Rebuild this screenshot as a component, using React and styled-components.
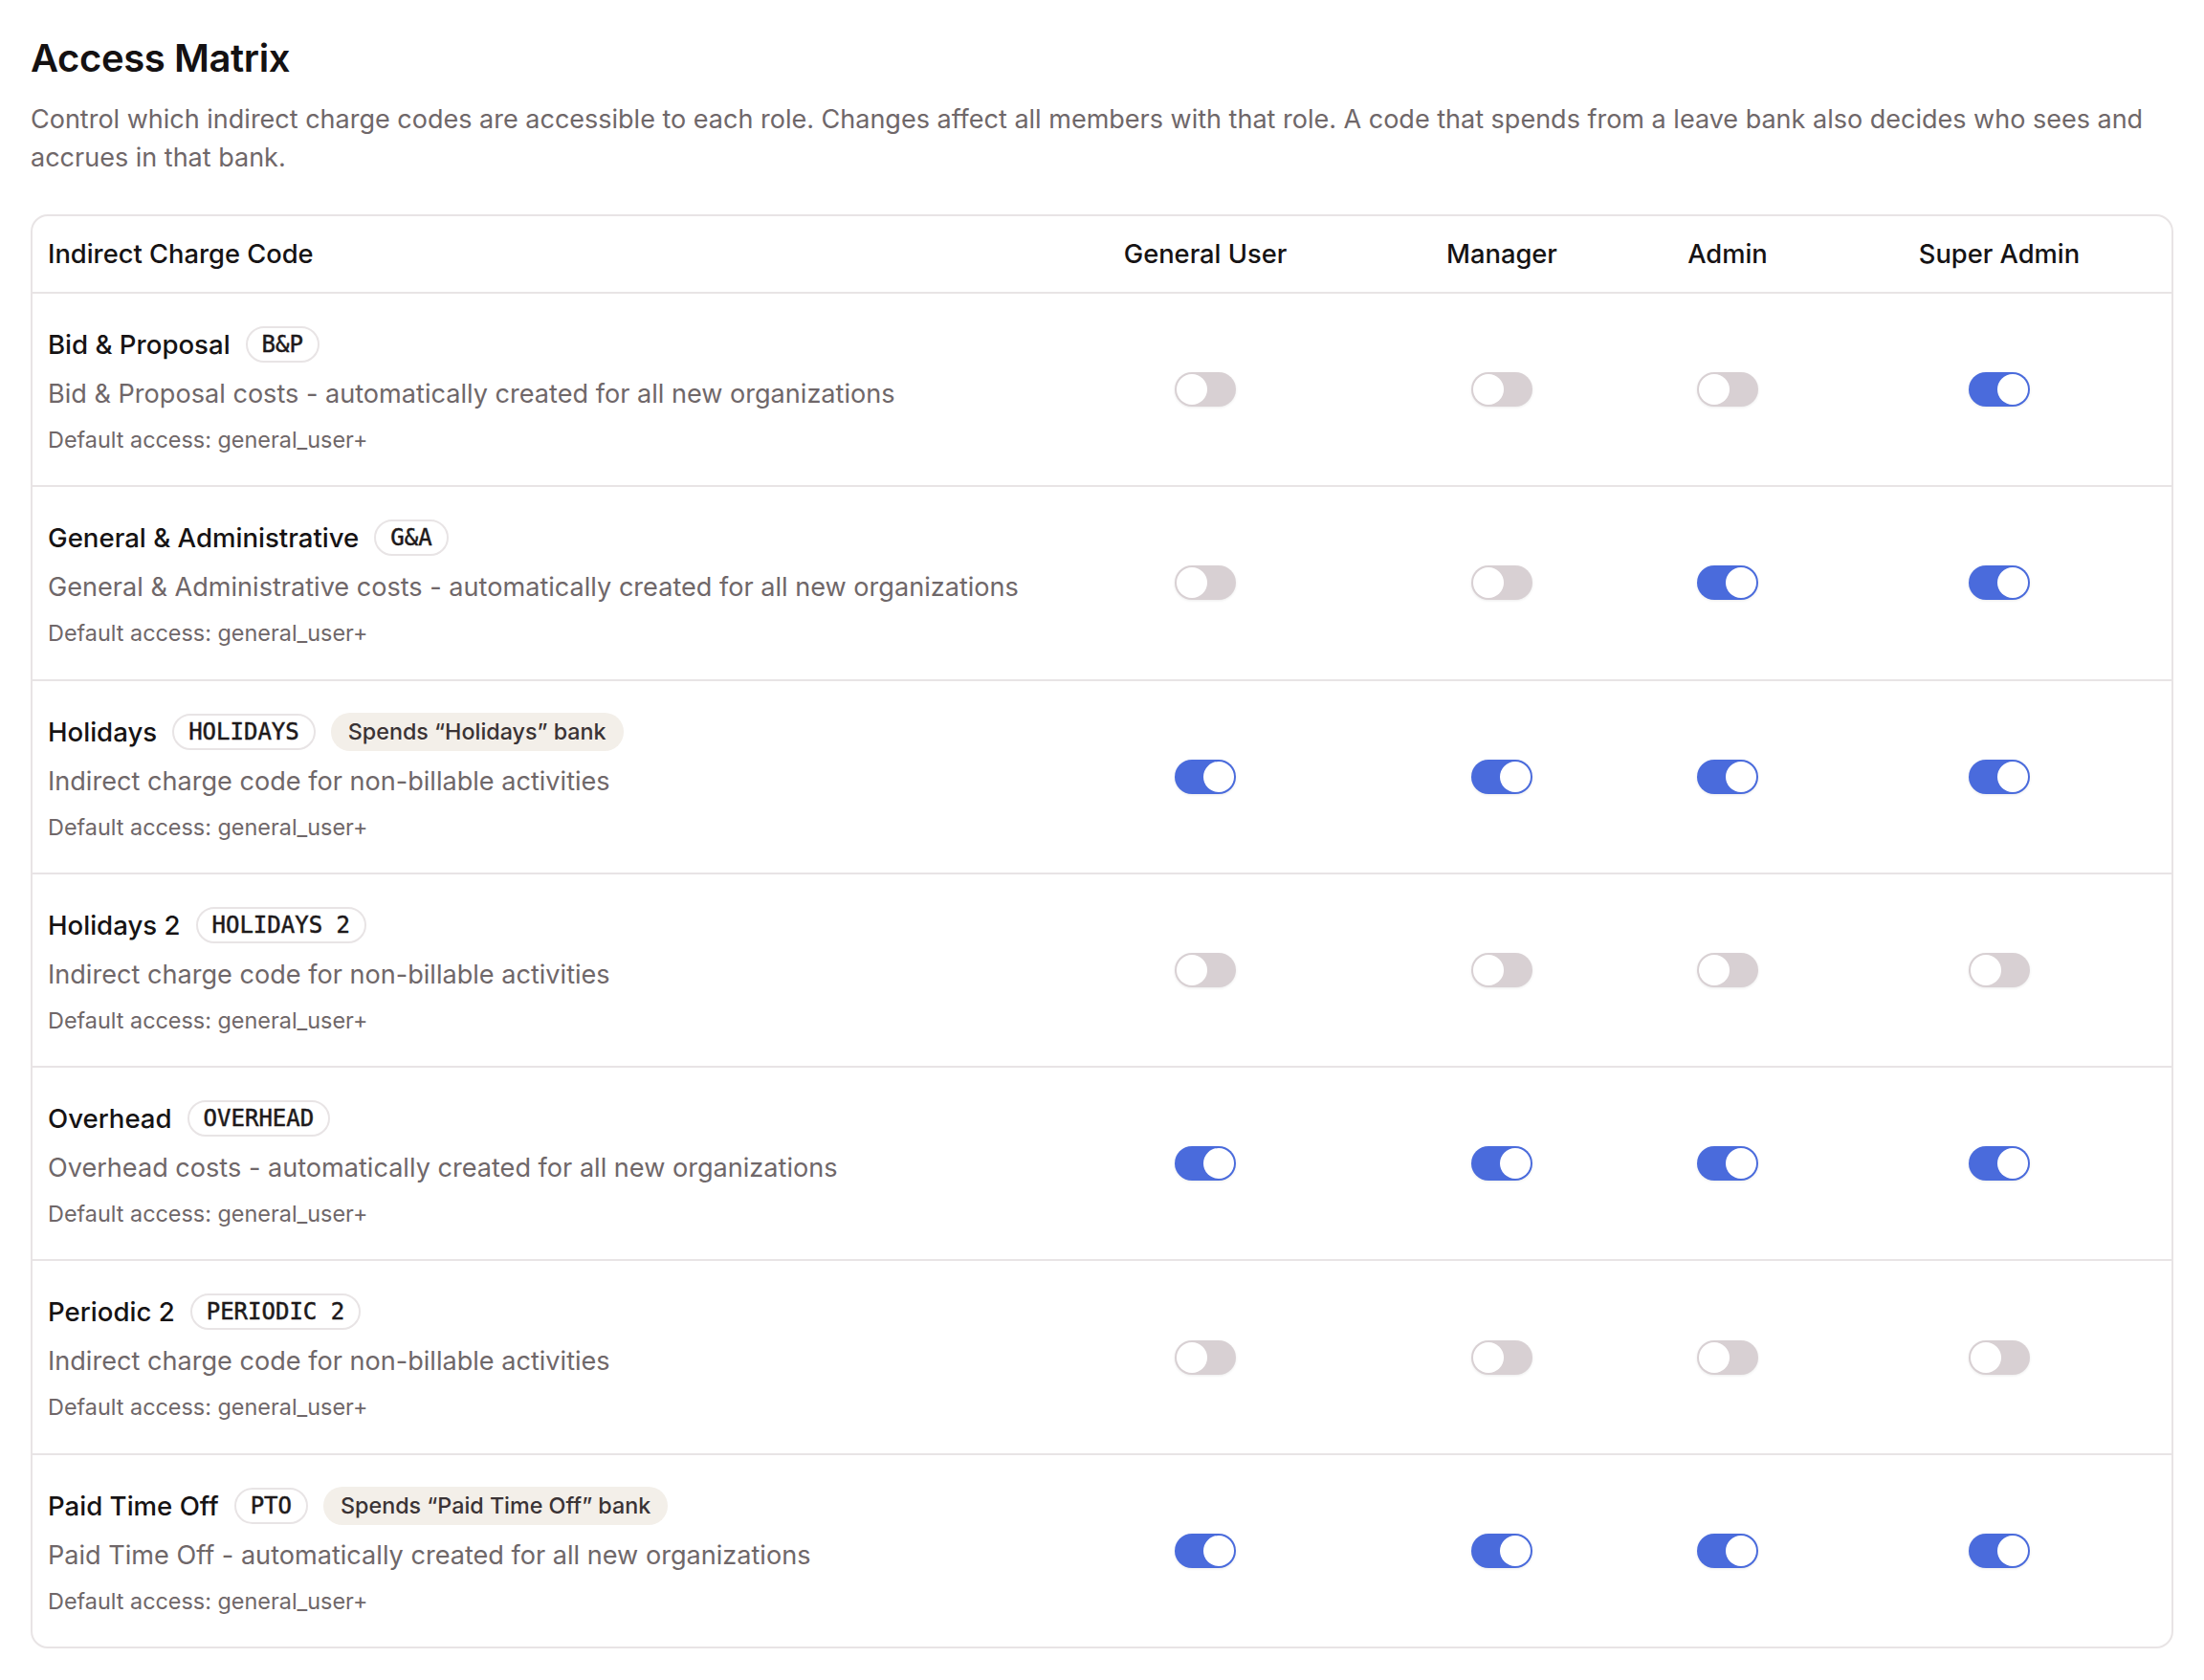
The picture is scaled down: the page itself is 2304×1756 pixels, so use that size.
import React, { useState } from 'react';
import styled, { createGlobalStyle } from 'styled-components';

const GlobalStyle = createGlobalStyle`
    body {
        margin: 0;
        background: #ffffff;
        font-family: Inter, "Noto Sans", sans-serif;
        color: #161314;
    }
`

const Page = styled.div`
    padding: 37px 32px 32px 32px;
`

const Title = styled.h2`
    margin: 0;
    font-size: 40px;
    line-height: 48px;
    font-weight: 600;
    letter-spacing: -0.4px;
    color: #141112;
`

const Intro = styled.p`
    margin: 20px 0 0 0;
    font-size: 27px;
    line-height: 40px;
    color: #6f6769;
`

const Card = styled.div`
    margin-top: 39px;
    border: 2px solid #e8e4e5;
    border-radius: 18px;
    overflow: hidden;
`

const Row = styled.div`
    display: grid;
    grid-template-columns: 1fr 356px 264px 208px 360px;
    align-items: center;
    border-top: ${p => (p.$first ? 'none' : '2px solid #e8e4e5')};
`

const HeadCell = styled.div`
    height: 79px;
    display: flex;
    align-items: center;
    justify-content: ${p => (p.$left ? 'flex-start' : 'center')};
    padding: 0 16px;
    font-size: 27.3px;
    font-weight: 500;
    color: #161314;
`

const CodeCell = styled.div`
    padding: 33px 16px 29.3px 16px;
`

const NameLine = styled.div`
    display: flex;
    align-items: center;
    gap: 16px;
    height: 40px;
`

const Name = styled.span`
    font-size: 27.6px;
    font-weight: 500;
    color: #161314;
`

const CodeBadge = styled.span`
    display: inline-flex;
    align-items: center;
    height: 38px;
    box-sizing: border-box;
    padding: 0 15px;
    border: 2px solid #e8e4e5;
    border-radius: 19px;
    font-family: "DejaVu Sans Mono", "Liberation Mono", monospace;
    font-size: 24px;
    font-weight: 400;
    -webkit-text-stroke: 0.5px #1d191a;
    color: #1d191a;
`

const BankBadge = styled.span`
    display: inline-flex;
    align-items: center;
    height: 40px;
    padding: 0 18px;
    border-radius: 20px;
    background: #f3efe9;
    font-size: 23.3px;
    font-weight: 500;
    color: #3a3335;
`

const Description = styled.div`
    margin-top: 12px;
    font-size: 27.1px;
    line-height: 40px;
    color: #6f6769;
`

const DefaultAccess = styled.div`
    margin-top: 10px;
    font-size: 23.4px;
    line-height: 36px;
    color: #6f6769;
`

const ToggleCell = styled.div`
    display: flex;
    justify-content: center;
    align-items: center;
`

const Track = styled.button`
    position: relative;
    width: 64px;
    height: 36px;
    padding: 0;
    border: none;
    border-radius: 18px;
    cursor: pointer;
    background: ${p => (p.$on ? '#4a6bdc' : '#d8d0d3')};
    box-shadow: 0 1px 3px rgba(0, 0, 0, 0.08);
`

const Knob = styled.span`
    position: absolute;
    top: 2px;
    left: ${p => (p.$on ? '30px' : '2px')};
    width: 32px;
    height: 32px;
    border-radius: 50%;
    background: #ffffff;
    transition: left 0.15s ease;
`

const roles = ['General User', 'Manager', 'Admin', 'Super Admin'];

const codes = [
    {
        id: 'bp',
        name: 'Bid & Proposal',
        code: 'B&P',
        description: 'Bid & Proposal costs - automatically created for all new organizations',
        access: [false, false, false, true],
    },
    {
        id: 'ga',
        name: 'General & Administrative',
        code: 'G&A',
        description: 'General & Administrative costs - automatically created for all new organizations',
        access: [false, false, true, true],
    },
    {
        id: 'hol',
        name: 'Holidays',
        code: 'HOLIDAYS',
        bank: 'Holidays',
        description: 'Indirect charge code for non-billable activities',
        access: [true, true, true, true],
    },
    {
        id: 'hol2',
        name: 'Holidays 2',
        code: 'HOLIDAYS 2',
        description: 'Indirect charge code for non-billable activities',
        access: [false, false, false, false],
    },
    {
        id: 'oh',
        name: 'Overhead',
        code: 'OVERHEAD',
        description: 'Overhead costs - automatically created for all new organizations',
        access: [true, true, true, true],
    },
    {
        id: 'per2',
        name: 'Periodic 2',
        code: 'PERIODIC 2',
        description: 'Indirect charge code for non-billable activities',
        access: [false, false, false, false],
    },
    {
        id: 'pto',
        name: 'Paid Time Off',
        code: 'PTO',
        bank: 'Paid Time Off',
        description: 'Paid Time Off - automatically created for all new organizations',
        access: [true, true, true, true],
    },
];

const Toggle = ({ on, onChange }) => (
    <Track type="button" role="switch" aria-checked={on} $on={on} onClick={onChange}>
        <Knob $on={on} />
    </Track>
)

const App = () => {
    const [matrix, setMatrix] = useState(codes);

    //flip one role's access for a single charge code
    function toggle(codeId, roleIdx) {
        setMatrix(matrix.map((c) => {
            if (c.id !== codeId) return c;
            const access = c.access.slice();
            access[roleIdx] = !access[roleIdx];
            return { ...c, access };
        }));
    }

    return (
        <Page>
            <GlobalStyle />
            <Title>Access Matrix</Title>
            <Intro>
                Control which indirect charge codes are accessible to each role. Changes affect all members with that role. A code that spends from a leave bank also decides who sees and accrues in that bank.
            </Intro>
            <Card>
                <Row $first>
                    <HeadCell $left>Indirect Charge Code</HeadCell>
                    {roles.map((r) => <HeadCell key={r}>{r}</HeadCell>)}
                </Row>
                {matrix.map((c) =>
                    <Row key={c.id}>
                        <CodeCell>
                            <NameLine>
                                <Name>{c.name}</Name>
                                <CodeBadge>{c.code}</CodeBadge>
                                {c.bank && <BankBadge>Spends “{c.bank}” bank</BankBadge>}
                            </NameLine>
                            <Description>{c.description}</Description>
                            <DefaultAccess>Default access: general_user+</DefaultAccess>
                        </CodeCell>
                        {c.access.map((on, i) =>
                            <ToggleCell key={roles[i]}>
                                <Toggle on={on} onChange={() => toggle(c.id, i)} />
                            </ToggleCell>
                        )}
                    </Row>
                )}
            </Card>
        </Page>
    )
}

export default App;
